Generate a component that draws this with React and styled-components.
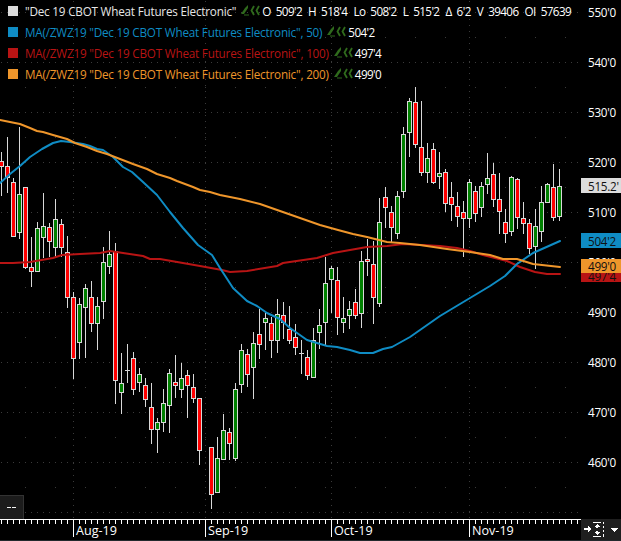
import React from 'react';
import styled, { createGlobalStyle } from 'styled-components';

const Global = createGlobalStyle`
  html, body { margin: 0; padding: 0; background: #000; }
  #root { width: 621px; height: 541px; overflow: hidden; }
`;

const FONT = `"Open Sans", "Noto Sans", "Liberation Sans", sans-serif`;

const C = { gray: '#dcdcdc', blue: '#0f8cc4', red: '#b81414', orange: '#ef962b', green: '#0a8a0a', cand: '#d8d8d8' };

// [x, bodyTop, bodyBottom, wickTop, wickBottom, kind]
const candles = [
[1,161,166,152,196,'r'],[7,166,177,137,193,'r'],[13,182,236,178,237,'r'],[19,194,232,127,239,'g'],[25,187,267,187,269,'r'],
[31,267,271,237,287,'r'],[37,228,271,222,271,'g'],[43,226,237,193,258,'g'],[49,227,241,223,257,'r'],[55,219,247,199,257,'g'],
[61,224,247,219,257,'r'],[67,252,297,236,308,'r'],[73,297,358,292,379,'r'],[79,304,342,298,359,'g'],[85,288,307,284,358,'g'],
[91,297,323,281,332,'r'],[97,306,323,297,350,'g'],[103,262,301,247,319,'g'],[109,254,266,231,274,'g'],[115,251,380,243,404,'r'],
[121,383,392,353,414,'g'],[127,370,370,344,383,'d'],[133,358,389,352,395,'r'],[139,374,382,368,392,'g'],[145,385,399,378,407,'r'],
[151,407,429,383,444,'r'],[157,422,429,418,453,'g'],[163,403,422,389,432,'g'],[169,373,405,369,433,'g'],[175,382,385,355,398,'r'],
[181,378,389,363,398,'g'],[187,375,385,370,418,'r'],[193,387,398,374,403,'r'],[199,398,450,398,465,'r'],
[211,447,494,447,509,'r'],[217,458,492,437,492,'g'],[223,430,459,414,459,'g'],[229,432,443,428,460,'r'],[235,389,458,383,461,'g'],
[241,350,384,344,393,'g'],[247,354,374,349,387,'r'],[253,343,367,332,399,'g'],[259,334,344,309,359,'r'],[265,318,322,313,350,'g'],
[271,323,340,317,358,'r'],[277,314,340,299,353,'g'],[283,315,322,302,339,'r'],[289,329,340,306,344,'r'],[295,337,347,324,355,'r'],
[301,353,353,340,374,'d'],[307,357,375,350,380,'r'],[313,340,377,328,378,'g'],[319,325,332,309,349,'g'],[325,283,322,257,345,'g'],
[331,268,279,266,313,'g'],[337,280,317,267,335,'r'],[343,318,322,297,333,'g'],[349,309,315,301,329,'g'],[355,302,315,289,319,'r'],
[361,261,313,251,328,'g'],[367,259,261,239,276,'r'],[373,264,297,241,324,'r'],[379,222,303,198,307,'g'],[385,197,207,187,228,'r'],
[391,212,227,206,243,'r'],[397,196,233,191,239,'g'],[403,134,191,127,198,'g'],[409,101,132,98,157,'g'],[415,102,144,87,148,'r'],
[421,147,172,101,176,'r'],[427,158,172,143,183,'g'],[433,149,182,143,184,'r'],[439,173,176,152,189,'g'],[445,172,203,169,212,'r'],
[451,197,204,182,221,'r'],[457,206,216,192,227,'r'],[463,212,218,201,257,'r'],[469,182,218,179,228,'g'],[475,191,213,186,222,'r'],
[481,186,207,182,217,'g'],[487,178,184,153,194,'g'],[493,174,199,163,207,'r'],[499,199,211,173,234,'r'],[505,222,233,209,243,'r'],
[511,177,231,176,236,'g'],[517,179,217,178,229,'r'],[523,218,223,202,234,'r'],[529,223,248,219,254,'r'],[535,226,246,209,269,'g'],
[541,202,231,186,242,'g'],[547,184,202,183,202,'g'],[553,187,217,164,221,'r'],[559,186,216,169,221,'g'],
];

const orange = [[0,120],[10,122],[20,124],[30,128],[37,131],[43,132],[53,135],[67,139],[75,143],[87,147],[97,151],[107,154],[120,159],[133,164],[147,169],[157,174],[170,178],[177,181],[193,187],[200,190],[210,192],[220,195],[240,199],[260,204],[280,211],[300,218],[320,225],[338,230],[353,234],[367,237],[387,242],[400,243],[420,245],[447,249],[470,252],[490,255],[503,259],[517,259],[533,264],[560,267]];
const blue = [[0,183],[10,174],[20,166],[30,157],[42,149],[53,143],[61,141],[70,142],[83,144],[90,146],[97,149],[103,150],[113,157],[123,167],[132,172],[143,182],[157,195],[170,212],[183,228],[198,245],[212,255],[220,268],[233,288],[247,301],[257,306],[267,313],[280,319],[290,328],[307,340],[327,346],[337,347],[350,350],[360,353],[373,353],[383,349],[392,347],[410,337],[420,330],[440,316],[460,304],[475,295],[490,286],[505,276],[517,264],[533,253],[560,241]];
const red = [[0,263],[13,263],[30,262],[53,258],[62,255],[80,254],[100,253],[110,251],[123,253],[143,256],[150,259],[160,259],[200,266],[222,270],[230,272],[247,271],[277,266],[283,263],[317,258],[333,253],[367,247],[387,246],[403,244],[440,246],[457,248],[470,251],[483,255],[507,261],[520,267],[535,272],[547,274],[560,274]];

const toPts = a => a.map(p => p.join(',')).join(' ');
const range = (from, to, step) => { const r = []; for (let i = from; i <= to; i += step) r.push(i); return r; };

const Screen = styled.div`
  width: 621px; height: 541px; background: #000; display: grid;
  grid-template-columns: 581px 40px; grid-template-rows: 519px 22px;
  font-family: ${FONT}; color: #fff; overflow: hidden;
`;
const Plot = styled.div`position: relative; overflow: hidden;`;
const ChartSvg = styled.svg`display: block;`;
const Legend = styled.div`
  position: absolute; top: 0; left: 8px; display: flex; flex-direction: column;
  font-size: 11.7px; letter-spacing: -0.2px;
`;
const LegendRow = styled.div`
  height: 21px; display: flex; align-items: center; white-space: pre; color: ${p => p.$color};
`;
const Swatch = styled.span`width: 10px; height: 10px; background: ${p => p.$color}; margin-right: 7px; flex: none;`;
const Value = styled.span`color: #fff; letter-spacing: -0.6px;`;
const Stat = styled.span`color: #fff; display: flex; gap: 5px; margin-right: 6px; letter-spacing: -0.6px;`;
const StatIcon = styled.svg`margin: 0 2px 0 4px; flex: none;`;
const ModeBox = styled.div`
  position: absolute; left: 0; bottom: 0; width: 23px; height: 23px; background: #1c1c1c;
  border-top: 1px solid #333; border-right: 1px solid #333; display: flex; align-items: center; justify-content: center;
  gap: 1px;
`;
const Dash = styled.span`width: 4px; height: 1px; background: #f4f4f4;`;
const PriceAxis = styled.div`
  position: relative; grid-row: 1; grid-column: 2; display: flex; flex-direction: column; margin-top: -14px;
  font-size: 11.7px; height: 533px; letter-spacing: -0.25px;
`;
const PriceTick = styled.div`
  height: 50px; flex: none; display: flex; align-items: center; padding-left: 7px; box-sizing: border-box; padding-top: 1px;
`;
const Tag = styled.div`
  position: absolute; left: 0; width: 40px; display: flex; align-items: center; padding-left: 7px; box-sizing: border-box;
  font-size: 11.7px; color: #111; background: ${p => p.$bg}; overflow: hidden; white-space: nowrap;
  top: ${p => p.$top + 14}px; height: ${p => p.$h}px; z-index: ${p => p.$z || 1};
`;
const TagClipText = styled.span`display: block; margin-top: -3px; line-height: 15px;`;
const TimeAxis = styled.div`
  position: relative; grid-row: 2; grid-column: 1; border-top: 1px solid #fff; border-bottom: 1px solid #22292c; box-sizing: border-box;
  font-size: 12.6px; overflow: hidden;
`;
const TimeLabel = styled.span`position: absolute; top: 2px; line-height: 18px;`;
const TimeSvg = styled.svg`position: absolute; left: 0; top: -1px;`;
const Corner = styled.div`
  grid-row: 2; grid-column: 2; background: #1f1f1f; display: flex; align-items: center; justify-content: center;
  border-bottom: 1px solid #22292c; box-sizing: border-box;
`;

const stats = [['O',"509'2"],['H',"518'4"],['Lo',"508'2"],['L',"515'2"],['Δ',"6'2"],['V','39406'],['OI','57639']];

const Icon = () => (
  <StatIcon width="20" height="11" viewBox="0 0 20 11" fill="none">
    <path d="M1 9 L5 3 L8 0 L8 3 L4 9 Z" fill="#2f6a1c" />
    <path d="M4 10 H9" stroke="#2f6a1c" strokeWidth="1" />
    <path d="M14 1 L11.5 5.5 L14 10 M19 1 L16.5 5.5 L19 10" stroke="#2f6a1c" strokeWidth="1.8" />
  </StatIcon>
);

const Candle = ({ c }) => {
  const [x, t, b, wt, wb, k] = c;
  if (k === 'd') {
    return <g stroke={C.cand}>
      <line x1={x+.5} x2={x+.5} y1={wt} y2={wb} />
      <line x1={x-2} x2={x+3} y1={t+.5} y2={t+.5} />
    </g>;
  }
  return <g>
    <line x1={x+.5} x2={x+.5} y1={wt} y2={wb} stroke={C.cand} />
    <rect x={x-1.5} y={t+.5} width={4} height={b-t} fill={k==='r' ? '#ff0000' : '#008000'} stroke={C.cand} />
  </g>;
};

const ticks = range(1, 579, 6);

export default function App() {
  return (
    <Screen>
      <Global />
      <Plot>
        <ChartSvg width="581" height="519" viewBox="0 0 581 519">
          <g fill="#3a3a3a" shapeRendering="crispEdges">
            {range(62, 512, 50).concat([12]).map(y => range(1, 579, 6).map(x => <rect key={y+'-'+x} x={x} y={y} width="1" height="1" />))}
            {[37,87,137,187,237,287,337,387,437,487].map(y => range(25, 579, 30).map(x => <rect key={y+'s'+x} x={x} y={y} width="1" height="1" />))}
            {[73,205,331,469].map(x => range(1, 517, 6).map(y => <rect key={x+'v'+y} x={x} y={y} width="1" height="1" />))}
          </g>
          <g shapeRendering="crispEdges">{candles.map(c => <Candle key={c[0]} c={c} />)}</g>
          <g fill="none" strokeWidth="2" strokeLinejoin="round" strokeLinecap="round">
            <polyline points={toPts(red)} stroke={C.red} />
            <polyline points={toPts(blue)} stroke={C.blue} />
            <polyline points={toPts(orange)} stroke={C.orange} />
          </g>
        </ChartSvg>
        <Legend>
          <LegendRow $color="#e6e6e6">
            <Swatch $color={C.gray} />"Dec 19 CBOT Wheat Futures Electronic"<Icon />
            {stats.map(([k, v]) => <Stat key={k}><span>{k}</span><span>{v}</span></Stat>)}
          </LegendRow>
          <LegendRow $color={C.blue}><Swatch $color={C.blue} />MA(/ZWZ19 "Dec 19 CBOT Wheat Futures Electronic", 50)<Icon /><Value>504'2</Value></LegendRow>
          <LegendRow $color={C.red}><Swatch $color={C.red} />MA(/ZWZ19 "Dec 19 CBOT Wheat Futures Electronic", 100)<Icon /><Value>497'4</Value></LegendRow>
          <LegendRow $color={C.orange}><Swatch $color={C.orange} />MA(/ZWZ19 "Dec 19 CBOT Wheat Futures Electronic", 200)<Icon /><Value>499'0</Value></LegendRow>
        </Legend>
        <ModeBox><Dash /><Dash /></ModeBox>
      </Plot>
      <PriceAxis>
        {[550,540,530,520,510,500,490,480,470,460].map(v => <PriceTick key={v}>{v}'0</PriceTick>)}
        <Tag $bg="#dcdcdc" $top={178} $h={15} $z={2}>515.2'</Tag>
        <Tag $bg={C.blue} $top={233} $h={15} $z={2}>504'2</Tag>
        <Tag $bg={C.red} $top={273} $h={9} $z={2}><TagClipText>497'4</TagClipText></Tag>
        <Tag $bg={C.orange} $top={259} $h={14} $z={3}>499'0</Tag>
      </PriceAxis>
      <TimeAxis>
        <TimeSvg width="581" height="22" shapeRendering="crispEdges">
          {ticks.map(x => <rect key={x} x={x} y="1" width="1" height="4" fill="#fff" />)}
          {[73,205,331,469].map(x => <rect key={x} x={x} y="1" width="1" height="17" fill="#fff" />)}
        </TimeSvg>
        <TimeLabel style={{ left: 76 }}>Aug-19</TimeLabel>
        <TimeLabel style={{ left: 208 }}>Sep-19</TimeLabel>
        <TimeLabel style={{ left: 334 }}>Oct-19</TimeLabel>
        <TimeLabel style={{ left: 472 }}>Nov-19</TimeLabel>
      </TimeAxis>
      <Corner>
        <svg width="34" height="17" viewBox="0 0 34 17" shapeRendering="crispEdges">
          <path d="M0 7h4V5l3 3-3 3V9H0z" fill="#fff" />
          <path d="M9 1h8v1H9zM9 15h8v1H9z" fill="#fff" />
          <path d="M13 3l3 3h-2v1h-2V6h-2zM13 14l3-3h-2v-1h-2v1h-2z" fill="#fff" />
          <path d="M19 1h1v2h-1zM19 5h1v2h-1zM19 9h1v2h-1zM19 13h1v3h-1z" fill="#fff" />
          <path d="M27 7h7l-3.5 4z" fill="#fff" />
        </svg>
      </Corner>
    </Screen>
  );
}
